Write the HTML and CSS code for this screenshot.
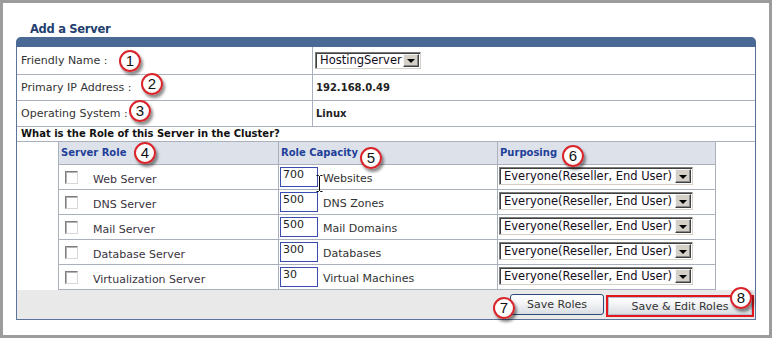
FILE: index.html
```html
<!DOCTYPE html>
<html lang="en">
<head>
<meta charset="utf-8">
<title>Add a Server</title>
<link rel="stylesheet" href="styles.css">
</head>
<body>
<div class="frame">
  <h1 class="title">Add a Server</h1>
  <div class="panel">
    <div class="panel-head"></div>
    <div class="panel-body">
      <div class="row first">
        <div class="label">Friendly Name :</div>
        <div class="value"><span class="sel sel-name"><span class="txt">HostingServer</span><span class="arr"></span></span></div>
      </div>
      <div class="row">
        <div class="label">Primary IP Address :</div>
        <div class="value">192.168.0.49</div>
      </div>
      <div class="row">
        <div class="label">Operating System :</div>
        <div class="value">Linux</div>
      </div>
      <div class="question">What is the Role of this Server in the Cluster?</div>
      <div class="roles">
        <div class="r head">
          <div class="c">Server Role</div>
          <div class="c">Role Capacity</div>
          <div class="c">Purposing</div>
        </div>
        <div class="r">
          <div class="c c1"><input type="checkbox" class="chk"><span class="name">Web Server</span></div>
          <div class="c c2"><input type="text" class="cap" value="700"><span class="unit">Websites</span></div>
          <div class="c c3"><span class="sel"><span class="txt">Everyone(Reseller, End User)</span><span class="arr"></span></span></div>
        </div>
        <div class="r">
          <div class="c c1"><input type="checkbox" class="chk"><span class="name">DNS Server</span></div>
          <div class="c c2"><input type="text" class="cap" value="500"><span class="unit">DNS Zones</span></div>
          <div class="c c3"><span class="sel"><span class="txt">Everyone(Reseller, End User)</span><span class="arr"></span></span></div>
        </div>
        <div class="r">
          <div class="c c1"><input type="checkbox" class="chk"><span class="name">Mail Server</span></div>
          <div class="c c2"><input type="text" class="cap" value="500"><span class="unit">Mail Domains</span></div>
          <div class="c c3"><span class="sel"><span class="txt">Everyone(Reseller, End User)</span><span class="arr"></span></span></div>
        </div>
        <div class="r">
          <div class="c c1"><input type="checkbox" class="chk"><span class="name">Database Server</span></div>
          <div class="c c2"><input type="text" class="cap" value="300"><span class="unit">Databases</span></div>
          <div class="c c3"><span class="sel"><span class="txt">Everyone(Reseller, End User)</span><span class="arr"></span></span></div>
        </div>
        <div class="r">
          <div class="c c1"><input type="checkbox" class="chk"><span class="name">Virtualization Server</span></div>
          <div class="c c2"><input type="text" class="cap" value="30"><span class="unit">Virtual Machines</span></div>
          <div class="c c3"><span class="sel"><span class="txt">Everyone(Reseller, End User)</span><span class="arr"></span></span></div>
        </div>
      </div>
      <div class="footer">
        <button class="btn">Save Roles</button>
        <button class="btn btn-edit">Save &amp; Edit Roles</button>
      </div>
    </div>
  </div>

  <svg class="ibeam" width="7" height="17" viewBox="0 0 7 17" aria-hidden="true">
    <path d="M0.5 0.5 H2.5 L3.5 1.5 L4.5 0.5 H6.5 M3.5 1.5 V15.5 M0.5 16.5 H2.5 L3.5 15.5 L4.5 16.5 H6.5" fill="none" stroke="#000" stroke-width="1"/>
  </svg>

  <span class="badge b1">1</span>
  <span class="badge b2">2</span>
  <span class="badge b3">3</span>
  <span class="badge b4">4</span>
  <span class="badge b5">5</span>
  <span class="badge b6">6</span>
  <span class="badge b7">7</span>
  <span class="badge b8">8</span>
</div>
</body>
</html>
```
FILE: styles.css
```css
* { box-sizing: border-box; }
html, body { margin: 0; padding: 0; background: #fff; }
body {
  font-family: "DejaVu Sans", Verdana, sans-serif;
  font-size: 11px;
  color: #333;
}

.frame {
  position: relative;
  width: 772px;
  height: 338px;
  border: 3px solid #9c9c9c;
  background: #fff;
}

.title {
  margin: 19px 0 1px 27px;
  font-size: 11.5px;
  line-height: 14px;
  font-weight: bold;
  color: #243f6e;
  letter-spacing: -0.3px;
}

.panel { width: 740px; margin-left: 13px; }
.panel-head {
  height: 10px;
  background: #4a6995;
  border-radius: 5px 5px 0 0;
}
.panel-body {
  border: 1px solid #5c7499;
  border-top: 0;
}

.row {
  display: grid;
  grid-template-columns: 296px 1fr;
  height: 26px;
  border-bottom: 1px solid #aab1bd;
}
.row.first { height: 28px; }
.label {
  display: flex;
  align-items: center;
  padding-left: 4px;
  border-right: 1px solid #aab1bd;
  color: #333;
}
.value {
  display: flex;
  align-items: center;
  padding-left: 3px;
  font-size: 10px;
  font-weight: bold;
  color: #222;
}

.question {
  height: 15px;
  padding-left: 4px;
  border-bottom: 1px solid #aab1bd;
  font-size: 10px;
  line-height: 14px;
  font-weight: bold;
  color: #111;
}

.roles {
  width: 658px;
  margin-left: 41px;
  border-left: 1px solid #aab1bd;
  border-right: 1px solid #aab1bd;
}
.r {
  display: grid;
  grid-template-columns: 220px 219px 1fr;
  height: 25px;
  border-bottom: 1px solid #aab1bd;
}
.r .c:not(:last-child) { border-right: 1px solid #aab1bd; }
.r.head {
  height: 23px;
  background: #dde2ea;
}
.r.head .c {
  padding-left: 2px;
  line-height: 22px;
  font-size: 10px;
  font-weight: bold;
  color: #1f3f99;
}

.c1 {
  display: flex;
  align-items: center;
  padding-left: 6px;
}
.chk {
  appearance: none;
  -webkit-appearance: none;
  width: 13px;
  height: 13px;
  margin: 0;
  background: #fff;
  border: 1px solid;
  border-color: #7d7d7d #d8d8d8 #d8d8d8 #7d7d7d;
  box-shadow: inset 1px 1px 0 #b4b4b4;
}
.name {
  margin-left: 15px;
  padding-top: 6px;
  line-height: 14px;
  color: #3a3340;
}

.c2 {
  display: flex;
  align-items: flex-start;
  padding: 2px 0 0 1px;
}
.cap {
  width: 38px;
  height: 20px;
  margin: 0;
  padding: 0 0 6px 2px;
  border: 1px solid #3b4cb0;
  border-radius: 0;
  font-family: "DejaVu Sans", Verdana, sans-serif;
  font-size: 11px;
  color: #222;
  background: #fff;
  outline: none;
}
.unit {
  margin: 5px 0 0 5px;
  line-height: 14px;
  color: #333;
}

.c3 { padding: 2px 0 0 1px; }

.sel {
  display: inline-flex;
  width: 194px;
  height: 18px;
  background: #fff;
  border: 1px solid;
  border-color: #7a7a7a #d4d0c8 #d4d0c8 #7a7a7a;
  box-shadow: inset 1px 1px 0 #404040;
  font-size: 11.5px;
  color: #140d1c;
}
.sel .txt {
  flex: 1;
  padding-left: 4px;
  line-height: 16px;
  white-space: nowrap;
}
.sel .arr {
  display: flex;
  align-items: center;
  justify-content: center;
  width: 16px;
  margin: 1px 1px 1px 0;
  background: #d4d0c8;
  border: 1px solid;
  border-color: #f4f4f4 #404040 #404040 #f4f4f4;
  box-shadow: inset -1px -1px 0 #8a8a8a;
}
.sel .arr::before {
  content: "";
  border-left: 4px solid transparent;
  border-right: 4px solid transparent;
  border-top: 4px solid #000;
  margin-top: 1px;
}
.sel-name {
  width: 106px;
  height: 17px;
  margin-left: -1px;
  font-weight: normal;
  font-size: 11.5px;
}
.sel-name .txt { line-height: 15px; }

.footer {
  display: flex;
  justify-content: flex-end;
  align-items: flex-start;
  gap: 2px;
  height: 29px;
  padding: 4px 1px 0 0;
  background: #e9e9e9;
}
.btn {
  height: 21px;
  width: 94px;
  margin: 0;
  padding: 0;
  border: 1px solid #2d4a78;
  border-radius: 3px;
  background: linear-gradient(#ffffff, #f3f4f6 45%, #d9dde3);
  font-family: "DejaVu Sans", Verdana, sans-serif;
  font-size: 11px;
  color: #333;
}
.btn-edit {
  width: 148px;
  height: 22px;
  margin-top: 1px;
  border: 2px solid #e3161d;
  border-radius: 0;
  box-shadow: inset 0 0 0 1px #b7bfcc;
  background: linear-gradient(#ffffff, #f1f2f4 45%, #d6dae0);
}

.ibeam {
  position: absolute;
  left: 313px;
  top: 172px;
}

.badge {
  position: absolute;
  width: 22px;
  height: 22px;
  border: 2px solid #d9242a;
  border-radius: 50%;
  background: radial-gradient(circle at 40% 35%, #ffffff 55%, #e4e4e4);
  box-shadow: 2px 3px 3px rgba(0, 0, 0, 0.45);
  font-family: "Liberation Sans", Arial, sans-serif;
  font-size: 15px;
  line-height: 18px;
  text-align: center;
  color: #111;
}
.b1 { left: 116px; top: 47px; }
.b2 { left: 138px; top: 70px; }
.b3 { left: 126px; top: 97px; }
.b4 { left: 131px; top: 139px; }
.b5 { left: 357px; top: 144px; }
.b6 { left: 559px; top: 142px; }
.b7 { left: 490px; top: 294px; }
.b8 { left: 727px; top: 284px; }
```
